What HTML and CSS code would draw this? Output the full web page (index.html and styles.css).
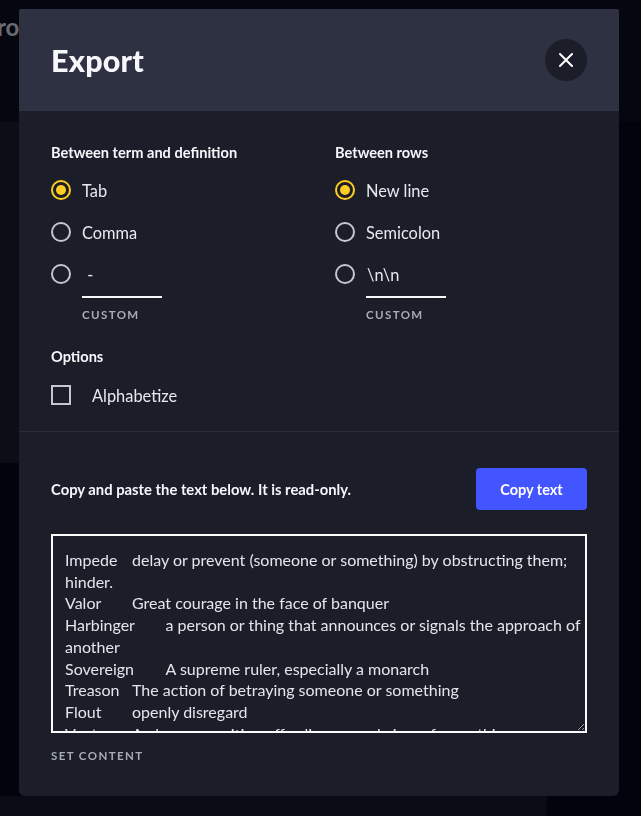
FILE: index.html
```html
<!DOCTYPE html>
<html lang="en">
<head>
  <meta charset="UTF-8" />
  <title>Export</title>
  <link rel="stylesheet" href="styles.css">
</head>
<body>
  
  <div class="page">
    <div class="page-top"><span class="page-title">ro</span></div>
    <div class="page-card"></div>
    <div class="page-gap"></div>
    <div class="page-foot"></div>
  </div>

  <div class="overlay">
    <div class="modal">
      <div class="modal-head">
        <h1>Export</h1>
        <button class="close-btn" aria-label="Close">
          <svg width="16" height="16" viewBox="0 0 16 16">
            <path d="M2 2 L14 14 M14 2 L2 14" stroke="#fff" stroke-width="2" stroke-linecap="round" />
          </svg>
        </button>
      </div>

      <div class="modal-section settings">
        <div class="columns">
          <div class="group">
            <div class="group-label">Between term and definition</div>
            <label class="radio-row"><span class="radio checked"></span>Tab</label>
            <label class="radio-row"><span class="radio"></span>Comma</label>
            <div class="radio-row custom-row">
              <span class="radio"></span>
              <div class="custom">
                <input class="custom-input" type="text" value=" -" />
                <div class="custom-label">Custom</div>
              </div>
            </div>
          </div>
          <div class="group">
            <div class="group-label">Between rows</div>
            <label class="radio-row"><span class="radio checked"></span>New line</label>
            <label class="radio-row"><span class="radio"></span>Semicolon</label>
            <div class="radio-row custom-row">
              <span class="radio"></span>
              <div class="custom">
                <input class="custom-input" type="text" value="\n\n" />
                <div class="custom-label">Custom</div>
              </div>
            </div>
          </div>
        </div>

        <div class="group-label options-label">Options</div>
        <label class="check-row"><span class="checkbox"></span>Alphabetize</label>
      </div>

      <div class="modal-section output">
        <div class="copy-row">
          <span class="copy-hint">Copy and paste the text below. It is read-only.</span>
          <button class="copy-btn">Copy text</button>
        </div>
        <textarea class="export-text" readonly>Impede	delay or prevent (someone or something) by obstructing them; hinder.
Valor	Great courage in the face of banquer
Harbinger	a person or thing that announces or signals the approach of another
Sovereign	A supreme ruler, especially a monarch
Treason	The action of betraying someone or something
Flout	openly disregard
Vantage	A place or position affording a good view of something
Zeal	great energy or enthusiasm in pursuit of a cause</textarea>
        <div class="custom-label set-label">Set content</div>
      </div>
    </div>
  </div>
</body>
</html>
```

FILE: styles.css
```css
* {
  box-sizing: border-box;
}

body {
  margin: 0;
  background: #03030d;
  font-family: Lato, 'Noto Sans', sans-serif;
  color: #f6f7fb;
  height: 816px;
  overflow: hidden;
}

/* background page */
.page-top {
  height: 122px;
  background: #05060f;
  padding-top: 12px;
}

.page-title {
  display: block;
  margin-left: -3px;
  font-size: 24px;
  font-weight: 700;
  color: #6a6b72;
}

.page-card {
  width: 547px;
  height: 341px;
  background: #0c0e17;
}

.page-gap {
  height: 333px;
}

.page-foot {
  width: 547px;
  height: 20px;
  background: #0a0c15;
}

/* dialog */
.overlay {
  position: fixed;
  inset: 0;
}

.modal {
  position: absolute;
  top: 9px;
  left: 19px;
  width: 600px;
  height: 787px;
  background: #1b1d28;
  border-radius: 2px 2px 6px 6px;
  overflow: hidden;
}

.modal-head {
  height: 102px;
  background: #2d3142;
  display: flex;
  align-items: center;
  justify-content: space-between;
  padding: 0 32px;
}

.modal-head h1 {
  margin: 0;
  font-size: 30.5px;
  font-weight: 900;
  letter-spacing: 0.2px;
}

.close-btn {
  width: 42px;
  height: 42px;
  border-radius: 50%;
  border: none;
  background: #1b1d28;
  display: flex;
  align-items: center;
  justify-content: center;
  padding: 0;
  cursor: pointer;
}

.modal-section {
  padding: 0 32px;
}

.settings {
  padding-top: 32px;
  padding-bottom: 16px;
  border-bottom: 1px solid #2a2d39;
}

.columns {
  display: grid;
  grid-template-columns: 284px 1fr;
}

.group-label {
  font-size: 14.6px;
  font-weight: 700;
  line-height: 20px;
  margin-bottom: 6px;
}

.radio-row {
  display: flex;
  align-items: center;
  gap: 11px;
  height: 42px;
  font-size: 16.4px;
  color: #e8e9ee;
}

.radio {
  width: 20px;
  height: 20px;
  border-radius: 50%;
  border: 2px solid #c4c6d0;
  flex: none;
  display: flex;
  align-items: center;
  justify-content: center;
}

.radio.checked {
  border-color: #ffcd1f;
}

.radio.checked::after {
  content: "";
  width: 10px;
  height: 10px;
  border-radius: 50%;
  background: #ffcd1f;
}

.custom-row {
  height: auto;
  align-items: flex-start;
}

.custom-row .radio {
  margin-top: 11px;
}

.custom-input {
  display: block;
  width: 80px;
  height: 45px;
  padding: 11px 0 12px 1px;
  background: none;
  border: none;
  border-bottom: 2px solid #f6f7fb;
  color: #e8e9ee;
  font-family: inherit;
  font-size: 16.4px;
  line-height: 20px;
  outline: none;
}

.custom-label {
  margin-top: 9px;
  font-size: 11.5px;
  font-weight: 700;
  line-height: 16px;
  letter-spacing: 1.4px;
  text-transform: uppercase;
  color: #a8abb8;
}

.options-label {
  margin-top: 24px;
  margin-bottom: 8px;
}

.check-row {
  display: flex;
  align-items: center;
  gap: 21px;
  height: 40px;
  font-size: 16.4px;
  color: #e8e9ee;
}

.checkbox {
  width: 20px;
  height: 20px;
  border: 2px solid #c4c6d0;
}

.output {
  padding-top: 36px;
  padding-bottom: 32px;
}

.copy-row {
  display: flex;
  align-items: center;
  justify-content: space-between;
}

.copy-hint {
  font-size: 14.8px;
  font-weight: 700;
}

.copy-btn {
  height: 42px;
  width: 111px;
  border: none;
  border-radius: 4px;
  background: #4255ff;
  color: #fff;
  font-family: inherit;
  font-size: 14.5px;
  font-weight: 700;
  cursor: pointer;
}

.export-text {
  display: block;
  width: 100%;
  height: 199px;
  margin-top: 24px;
  padding: 13px 3px 0 12px;
  background: #1b1d28;
  border: 2px solid #fbfbfd;
  color: #e4e5ea;
  font-family: Lato, 'Noto Sans', sans-serif;
  font-size: 16px;
  line-height: 21.7px;
  tab-size: 33.5px;
  outline: none;
  scrollbar-width: none;
}

.set-label {
  margin-top: 15px;
}
```
